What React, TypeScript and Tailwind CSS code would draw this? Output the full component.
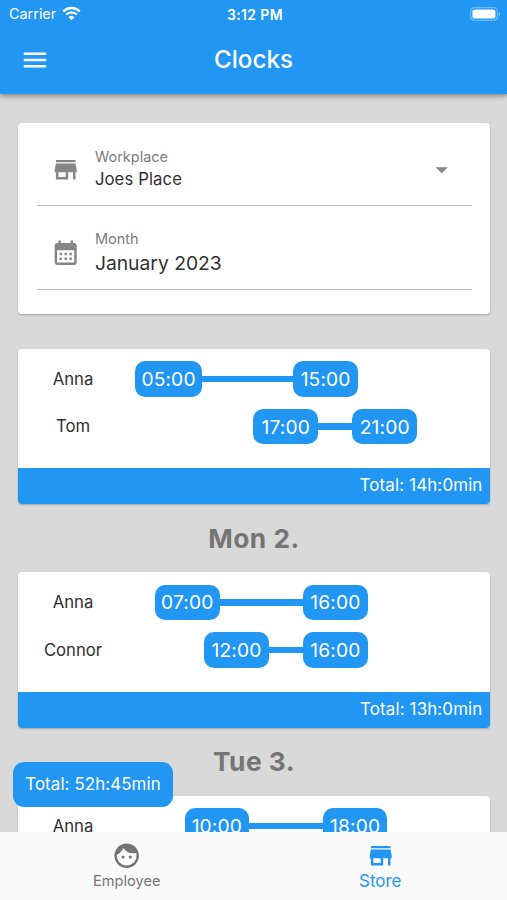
import clsx from "clsx";
import {
  MdArrowDropDown,
  MdCalendarMonth,
  MdFace,
  MdMenu,
  MdStore,
} from "react-icons/md";

type Shift = { name: string; start: number; end: number };

const days: { title?: string; total: string; shifts: Shift[] }[] = [
  {
    total: "14h:0min",
    shifts: [
      { name: "Anna", start: 5, end: 15 },
      { name: "Tom", start: 17, end: 21 },
    ],
  },
  {
    title: "Mon 2.",
    total: "13h:0min",
    shifts: [
      { name: "Anna", start: 7, end: 16 },
      { name: "Connor", start: 12, end: 16 },
    ],
  },
  {
    title: "Tue 3.",
    total: "8h:0min",
    shifts: [{ name: "Anna", start: 10, end: 18 }],
  },
];

const HOUR_WIDTH = 9.84;
const CHIP_SPACE = 59.6;

const formatHour = (hour: number) => `${String(hour).padStart(2, "0")}:00`;

const StatusBar = () => (
  <div className="grid h-[28px] grid-cols-3 items-center pl-[9px] pr-[6px] text-white">
    <div className="flex items-center gap-[6px]">
      <span className="text-[14.4px]">Carrier</span>
      <svg width="19" height="15" viewBox="0 0 20 15" fill="none">
        <path d="M1.3 5.3a12.3 12.3 0 0 1 17.4 0" stroke="white" strokeWidth="2.6" />
        <path d="M4.4 8.6a7.9 7.9 0 0 1 11.2 0" stroke="white" strokeWidth="2.4" />
        <path d="M10 14.6 6.9 11.4a4.5 4.5 0 0 1 6.2 0z" fill="white" />
      </svg>
    </div>
    <span className="text-center text-[14px] font-semibold tracking-[0.35px]">
      3:12 PM
    </span>
    <svg className="justify-self-end" width="31" height="14" viewBox="0 0 31 14">
      <rect x="0.6" y="0.6" width="26.8" height="12.8" rx="4" fill="none" stroke="white" strokeOpacity="0.35" strokeWidth="1.2" />
      <rect x="2.4" y="2.4" width="23" height="9.2" rx="2.2" fill="white" />
      <path d="M28.8 4.8c2 .8 2 3.6 0 4.4z" fill="white" fillOpacity="0.4" />
    </svg>
  </div>
);

const Header = () => (
  <header className="relative z-10 h-[94px] shrink-0 bg-[#2196f3] shadow-[0_2px_5px_rgba(0,0,0,0.4)]">
    <StatusBar />
    <div className="grid h-[64px] grid-cols-[70px_1fr_70px] items-center text-white">
      <MdMenu className="ml-5 size-[30px]" />
      <h1 className="pt-px text-center text-[24.2px] font-medium">Clocks</h1>
    </div>
  </header>
);

const Filters = () => (
  <section className="h-[190.5px] rounded-[4px] bg-white px-[18.5px] shadow-[0_1px_2px_rgba(0,0,0,0.25)]">
    <div className="flex h-[82.5px] items-center border-b-[1.5px] border-[#bdbdbd] pl-[14.5px] pr-[15px] pt-[11px]">
      <MdStore className="size-[29.4px] text-[#868686]" />
      <div className="ml-[14.5px] flex-1">
        <p className="text-[14.5px] leading-[21px] text-[#7c7c7c]">Workplace</p>
        <p className="text-[16.7px] leading-[25px] tracking-[0.1px] text-[#303030]">
          Joes Place
        </p>
      </div>
      <MdArrowDropDown className="size-[29.4px] text-[#868686]" />
    </div>
    <div className="flex h-[84.5px] items-center border-b-[1.5px] border-[#bdbdbd] pl-[14.5px] pt-[11px]">
      <MdCalendarMonth className="size-[29.4px] text-[#868686]" />
      <div className="ml-[14.5px]">
        <p className="text-[14.5px] leading-[20px] text-[#7c7c7c]">Month</p>
        <p className="text-[19.3px] leading-[28px] text-[#303030]">January 2023</p>
      </div>
    </div>
  </section>
);

const TimeChip = ({ hour }: { hour: number }) => (
  <span className="flex h-[35.5px] min-w-[64.5px] shrink-0 items-center justify-center rounded-[10px] bg-[#2196f3] px-[6px] pt-px text-[19.2px] tracking-[0.15px] text-white">
    {formatHour(hour)}
  </span>
);

const ShiftRow = ({ name, start, end }: Shift) => (
  <div className="flex h-[35.5px] items-center">
    <span className="w-[110px] shrink-0 pt-px text-center text-[16.7px] text-[#303030]">
      {name}
    </span>
    <div
      className="flex shrink-0 items-center"
      style={{
        marginLeft: (start - 4.25) * HOUR_WIDTH,
        width: (end - start) * HOUR_WIDTH + CHIP_SPACE,
      }}
    >
      <TimeChip hour={start} />
      <div className="h-[6.5px] flex-1 bg-[#2196f3]" />
    </div>
    <TimeChip hour={end} />
  </div>
);

const DayCard = ({ title, total, shifts }: (typeof days)[number]) => (
  <section>
    {title && (
      <h2 className="flex h-[68px] items-center justify-center pt-px text-[26.3px] font-bold tracking-[0.5px] text-[#757575]">
        {title}
      </h2>
    )}
    <div className="h-[155.5px] overflow-hidden rounded-[4px] bg-white shadow-[0_1px_2px_rgba(0,0,0,0.25)]">
      <div className="flex h-[119.5px] flex-col gap-[12.2px] pt-[12.5px]">
        {shifts.map((shift) => (
          <ShiftRow key={shift.name} {...shift} />
        ))}
      </div>
      <div className="flex h-[36px] items-center justify-end bg-[#2196f3] pr-[7.5px] text-[16.9px] tracking-[0.15px] text-white">
        Total: {total}
      </div>
    </div>
  </section>
);

const navItems = [
  { label: "Employee", icon: MdFace, active: false },
  { label: "Store", icon: MdStore, active: true },
];

const BottomNav = () => (
  <nav className="relative z-10 grid h-[68.5px] shrink-0 grid-cols-2 bg-[#fafafa]">
    {navItems.map(({ label, icon: Icon, active }) => (
      <div
        key={label}
        className={clsx(
          "flex flex-col items-center pt-[9.5px]",
          active ? "text-[#2196f3]" : "text-[#757575]"
        )}
      >
        <Icon className="size-[29.4px]" />
        <span
          className={clsx(
            "leading-[22px]",
            active ? "text-[16.9px]" : "text-[14.6px]"
          )}
        >
          {label}
        </span>
      </div>
    ))}
  </nav>
);

export default function App() {
  return (
    <div className="relative flex h-[900px] w-[507px] flex-col overflow-hidden bg-[#d9d9d9] font-['Inter',sans-serif]">
      <Header />
      <main className="min-h-0 flex-1 overflow-hidden pl-[18px] pr-[17px] pt-[29px]">
        <Filters />
        <div className="mt-[35px]">
          {days.map((day, index) => (
            <DayCard key={index} {...day} />
          ))}
        </div>
      </main>
      <div className="absolute bottom-[93px] left-[13px] flex h-[45px] w-[160px] items-center justify-center rounded-[11px] bg-[#2196f3] text-[16.9px] tracking-[0.1px] text-white">
        Total: 52h:45min
      </div>
      <BottomNav />
    </div>
  );
}
